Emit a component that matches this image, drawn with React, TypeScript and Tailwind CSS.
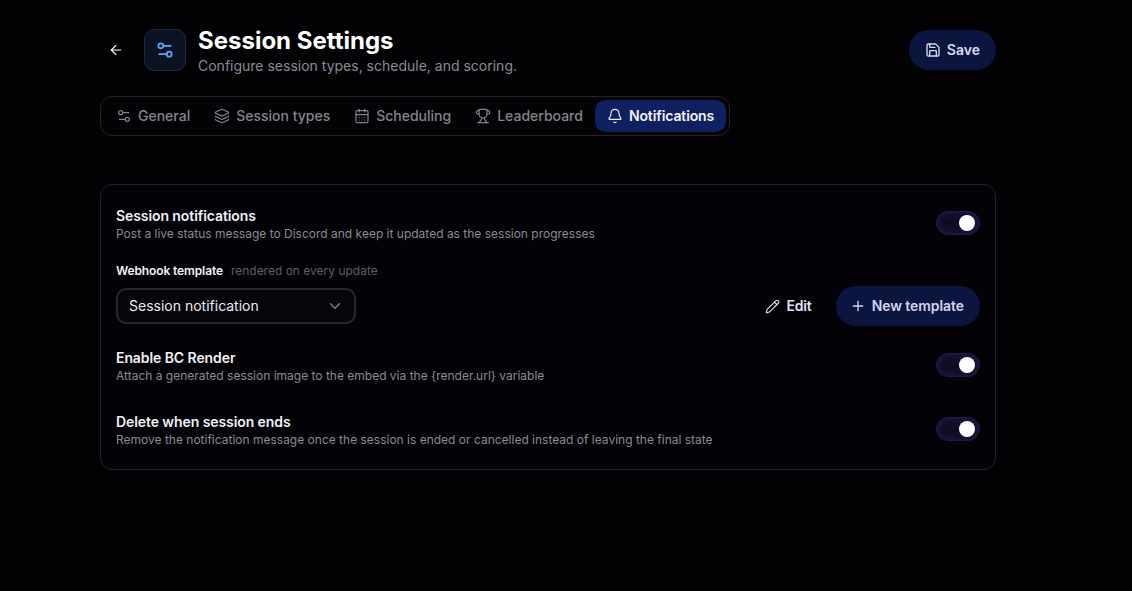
import { ArrowLeft, Bell, CalendarDays, ChevronDown, Layers, Pencil, Plus, Save, Settings2, Trophy } from 'lucide-react';

const tabs = [
  { label: 'General', icon: Settings2 },
  { label: 'Session types', icon: Layers },
  { label: 'Scheduling', icon: CalendarDays },
  { label: 'Leaderboard', icon: Trophy },
  { label: 'Notifications', icon: Bell, active: true },
];

function Toggle() {
  return (
    <div className="-mt-[2px] flex h-6 w-11 items-center justify-end rounded-full border border-[#1a1c50] bg-[#100d22] px-[4px] shadow-[inset_0_0_7px_#20205e]">
      <div className="h-4 w-4 rounded-full bg-white" />
    </div>
  );
}

function ToggleRow({ title, desc }: { title: string; desc: string }) {
  return (
    <div className="flex items-center justify-between">
      <div>
        <div className="text-sm leading-5 font-semibold tracking-[-0.006em] text-[#f1f0f5]">{title}</div>
        <div className="text-xs leading-4 text-[#8b8a94]">{desc}</div>
      </div>
      <Toggle />
    </div>
  );
}

export default function App() {
  return (
    <div className="min-h-[591px] bg-[#020204] pl-[100px] font-['Inter',sans-serif]">
      <div className="w-[896px] pt-[24px]">
        <div className="flex items-center justify-between">
          <div className="flex items-center">
            <button className="flex h-8 w-8 items-center justify-center text-white">
              <ArrowLeft size={16} strokeWidth={1.75} />
            </button>
            <div className="ml-3 flex h-[42px] w-[42px] items-center justify-center rounded-[10px] border border-[#1c2b45] bg-[#0b1322] text-[#60a5fa]">
              <Settings2 size={20} strokeWidth={2} />
            </div>
            <div className="ml-3 pt-[2px]">
              <div className="text-2xl leading-[30px] font-bold text-white">Session Settings</div>
              <div className="text-sm leading-5 text-[#8b8a94]">Configure session types, schedule, and scoring.</div>
            </div>
          </div>
          <button className="flex h-10 items-center gap-1.5 rounded-full bg-[#0b1640] px-4 text-sm font-semibold text-[#dcd8f0]">
            <Save size={16} strokeWidth={2} />
            Save
          </button>
        </div>

        <div className="mt-5 inline-flex h-10 items-center rounded-xl border border-[#242428] bg-[#030305] px-[3px] align-top">
          {tabs.map(t => {
            const Icon = t.icon;
            return (
              <div
                key={t.label}
                className={
                  t.active
                    ? 'flex h-8 items-center gap-1.5 rounded-[10px] bg-[#0f2060] px-3 text-sm font-semibold tracking-[-0.008em] text-[#f4f3fb]'
                    : 'flex h-8 items-center gap-1.5 rounded-[10px] px-3 text-sm font-medium text-[#85848e]'
                }
              >
                <Icon size={16} strokeWidth={1.75} />
                {t.label}
              </div>
            );
          })}
        </div>

        <div className="mt-12 flex h-[286px] flex-col rounded-xl border border-[#232327] bg-[#030207] px-[15px] pt-[21px]">
          <ToggleRow
            title="Session notifications"
            desc="Post a live status message to Discord and keep it updated as the session progresses"
          />
          <div className="mt-[21px] flex items-center gap-2 text-xs leading-4">
            <span className="font-semibold tracking-[-0.01em] text-[#f1f0f5]">Webhook template</span>
            <span className="text-[#5f5e68]">rendered on every update</span>
          </div>
          <div className="mt-[7px] flex items-center justify-between">
            <div className="flex h-9 w-60 items-center justify-between rounded-[10px] border-2 border-[#28282d] bg-[#060509] pr-[10px] pl-[11px] text-sm text-[#ecebf0]">
              Session notification
              <ChevronDown size={18} strokeWidth={1.75} className="text-[#85848e]" />
            </div>
            <div className="flex items-center gap-6">
              <button className="flex items-center gap-1.5 text-sm font-semibold tracking-[-0.01em] text-[#e4e0f2]">
                <Pencil size={15} strokeWidth={1.75} />
                Edit
              </button>
              <button className="flex h-10 items-center gap-1.5 rounded-full bg-[#0b1640] pr-4 pl-[14px] text-sm font-semibold tracking-[-0.005em] text-[#d6d2ec]">
                <Plus size={16} strokeWidth={2} />
                New template
              </button>
            </div>
          </div>
          <div className="mt-[22px]">
            <ToggleRow title="Enable BC Render" desc="Attach a generated session image to the embed via the {render.url} variable" />
          </div>
          <div className="mt-7">
            <ToggleRow
              title="Delete when session ends"
              desc="Remove the notification message once the session is ended or cancelled instead of leaving the final state"
            />
          </div>
        </div>
      </div>
    </div>
  );
}
